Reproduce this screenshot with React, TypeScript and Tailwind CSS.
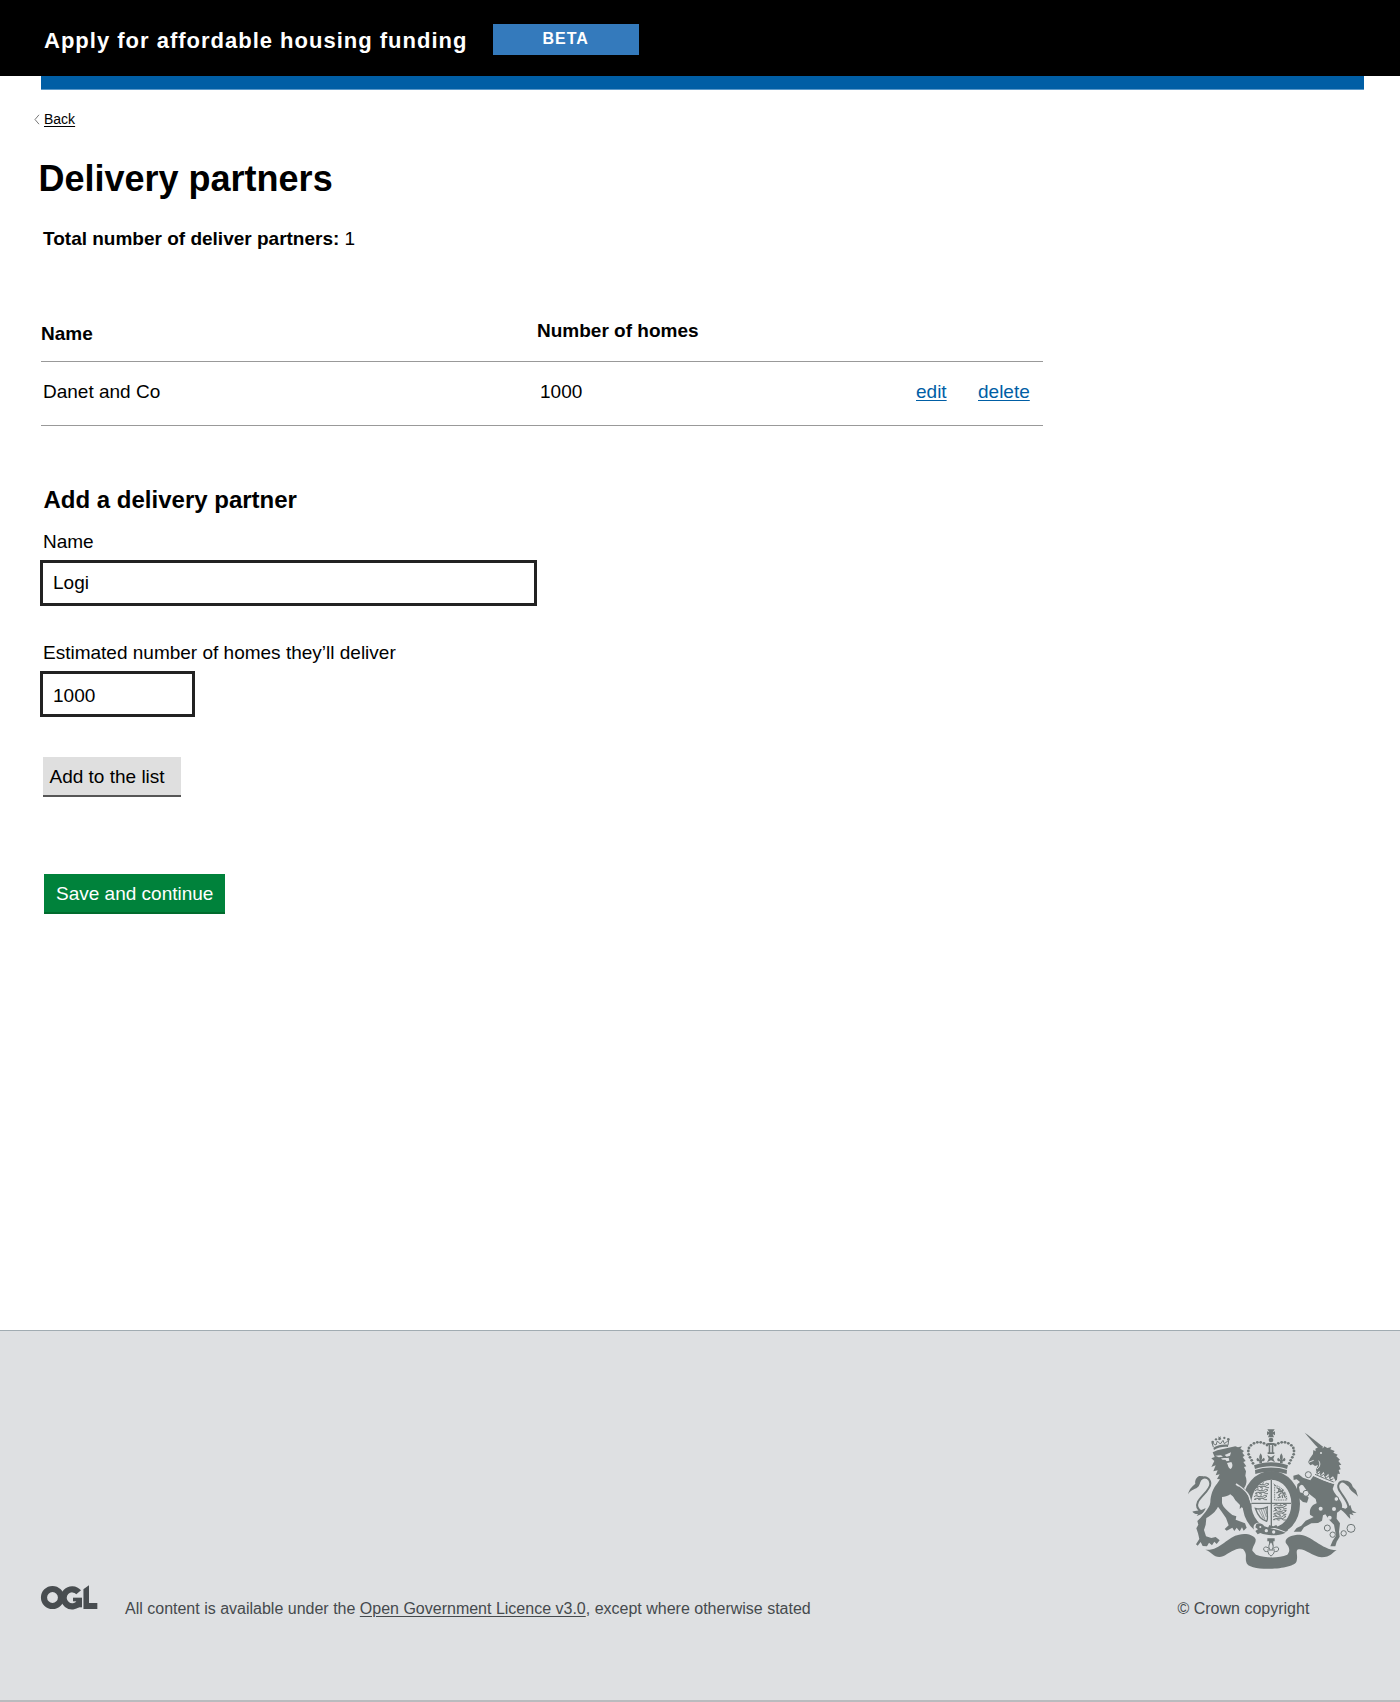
import React from "react";

const INK = "#6f7777";
const PAPER = "#dee0e2";

function OglLogo() {
  return (
    <svg className="block h-[26px] w-[59px]" viewBox="120 42 177 78" role="img" aria-label="OGL">
      <g fill="none" stroke="#484d50" strokeWidth="18.5">
        <circle cx="157.500" cy="82.500" r="25.500" />
        <path d="M236 67A25.500 25.500 0 1 0 238 97" />
        <path d="M219 88.500H246" strokeWidth="11" />
        <path d="M238 84V112" strokeWidth="16" />
      </g>
      <path d="M250 58L267 46V99H292V117H250Z" fill="#484d50" />
      <path d="M248.300 56V118" stroke={PAPER} strokeWidth="2" />
    </svg>
  );
}

const crownBeads: [number, number][] = [
  [291, 90], [282, 85], [272, 82], [262, 82], [252, 85], [243, 91], [237, 99], [235, 108], [236, 118], [240, 127], [245, 136], [249, 145],
  [316, 90], [325, 85], [335, 82], [345, 82], [355, 85], [364, 91], [370, 99], [372, 108], [371, 118], [367, 127], [362, 136], [358, 145],
];

const smallLions: [number, number][] = [
  [261, 212], [258, 230], [255, 248], [314, 275], [313, 292], [312, 309],
];

function FleurDeLis({ x, y }: { x: number; y: number }) {
  return (
    <g transform={`translate(${x} ${y})`}>
      <path d="M0 -15C6 -7 5 0 2 6L9 -2C15 2 12 9 7 9L4 9V15H-4V9L-7 9C-12 9 -15 2 -9 -2L-2 6C-5 0 -6 -7 0 -15Z" />
    </g>
  );
}

function RoyalArms() {
  return (
    <svg className="block h-[165px] w-[200px]" viewBox="0 0 600 495" role="img" aria-label="Royal coat of arms">
      <g fill={INK}>
        {/* Lion tail */}
        <path
          d="M97 292C82 284 78 273 84 260C93 242 122 224 121 205C120 190 106 183 96 190C87 196 84 207 76 212"
          fill="none"
          stroke={INK}
          strokeWidth="6"
        />
        <path d="M54 238C58 222 65 216 76 206C74 196 79 187 88 183L101 184C92 192 92 204 86 214C78 224 64 222 54 238Z" />
        <path d="M67 290C77 286 92 288 107 279C101 296 91 300 80 303L84 297C78 298 72 296 67 290Z" />
        {/* Lion body */}
        <path d="M128 112L142 106L196 94L204 97L216 94L211 101L222 108L217 113L224 122L218 126L227 138L220 141L229 154L222 156L228 169L226 182C232 196 230 208 222 219C230 231 238 245 240 264L244 276L238 287L229 278L222 286L216 276L209 282L210 270L196 256L190 245L181 238C172 244 164 245 156 246L156 264C159 279 176 290 187 300L199 304L197 314L213 320L225 325L230 338L221 347L216 337L209 349L200 338L193 348L187 338L170 347L164 342L176 331L168 309L154 289L144 275C136 291 125 300 109 309L107 329L102 345L108 364L124 369L137 366L149 376L140 387L133 380L126 391L117 383L111 394L98 393L92 381L83 392L78 388L88 372L84 355L79 340L85 329L82 318L92 308L107 290C113 281 120 274 121 262C122 238 129 221 142 205L150 193L141 192L149 178L137 181L143 166L130 169L137 151L124 156L133 138L124 130L134 126Z" />
        {/* Lion crown */}
        <path d="M130 98C144 90 159 87 174 89L174 96C160 94 146 97 132 105Z" />
        <path d="M130 96L126 84L138 90L142 78L151 87L159 76L163 86L176 76L174 91" fill="none" stroke={INK} strokeWidth="3" />
        <path d="M145 64L149 67L153 63L151 69L155 73L149 72L144 75L146 70Z" />
        <circle cx="128" cy="81" r="4" />
        <circle cx="138" cy="73" r="3.500" />
        <circle cx="149" cy="72" r="3.500" />
        <circle cx="163" cy="69" r="3.500" />
        <circle cx="175" cy="73" r="4" />
        {/* Lion face */}
        <g fill={PAPER}>
          <path d="M136 122L153 121L159 125L146 127Z" />
          <path d="M164 120L183 112L180 122L170 125Z" />
          <path d="M153 131C160 127 170 130 176 128L178 137L170 139L166 134L158 134Z" />
          <path d="M171 144L184 141C190 150 187 160 181 162C174 158 174 150 171 144Z" />
        </g>

        {/* Royal crown */}
        <path d="M292 43H314L308 52L315 49V61L308 57L312 67H294L298 57L291 61V49L298 52Z" />
        <circle cx="303" cy="75" r="7" />
        <path d="M292 84H314V90H292ZM296 90H300V113H296ZM306 90H310V113H306ZM293 112H313V117H293Z" />
        <path d="M303 92V111" stroke={INK} strokeWidth="1.500" />
        {crownBeads.map(([x, y]) => (
          <circle key={`${x}-${y}`} cx={x} cy={y} r="4.200" />
        ))}
        <FleurDeLis x={272} y={130} />
        <FleurDeLis x={334} y={130} />
        <path d="M292 120L303 127L314 120L310 131L315 142L303 136L291 142L296 131Z" />
        <path d="M252 151C285 139 321 139 354 151L351 162C319 151 287 151 255 162Z" />
        <path d="M255 165C285 155 321 155 351 165L350 177C321 168 285 168 256 177Z" />
      </g>

      {/* Garter */}
      <ellipse cx="304" cy="266" rx="73" ry="85" fill="none" stroke={INK} strokeWidth="26" />
      <path d="M304 195V336M244 265H363" stroke={INK} strokeWidth="4" />
      <g fill={INK}>
        {smallLions.map(([x, y]) => (
          <g key={`${x}-${y}`} transform={`translate(${x} ${y})`} fill="none" stroke={INK} strokeWidth="3">
            <path d="M-3 -3C3 -8 8 -4 12 -3L23 -3L28 -7L36 -5L31 -1L25 2L5 2L-2 5H4M7 2L11 6H17M23 2L29 6H36M2 -8H8M16 -7L21 -9" />
          </g>
        ))}
        <path
          d="M311 206L351 253M314 209V255H350V249M314 211C332 213 346 230 351 249"
          fill="none"
          stroke={INK}
          strokeWidth="2.500"
          strokeDasharray="5 2"
        />
        <path
          d="M320 219L328 221L335 229L341 236L346 248M328 221L325 231L319 234M327 230L337 229L339 222M334 233L326 240L331 246L322 249M338 236L347 234M336 240L338 249"
          fill="none"
          stroke={INK}
          strokeWidth="3.500"
        />
        <path d="M256 280C268 283 280 282 292 276C289 294 296 310 290 319C277 316 263 301 256 280Z" fill="none" stroke={INK} strokeWidth="4" />
        <path d="M266 283L280 310M273 282L285 314M280 281L289 306M286 279L291 297" stroke={INK} strokeWidth="2" />
      </g>

      {/* Lion forearm over the garter */}
      <path d="M198 207C213 217 230 229 237 243L243 265" fill="none" stroke={PAPER} strokeWidth="5" />
      <path d="M206 214C220 224 231 233 235 247L242 267L241 280L236 287L229 276L221 284L216 273L204 262L190 245Z" fill={INK} />

      {/* Buckled strap */}
      <path d="M252 330C265 318 277 323 286 331C308 338 329 341 350 352C326 370 291 368 265 358C253 352 248 341 252 330Z" fill={PAPER} />
      <path d="M259 327C268 322 278 326 283 334C305 342 326 344 347 353C322 365 291 362 271 354L263 358L256 348L264 343L256 337Z" fill={INK} />
      <path d="M355 346L382 327" stroke={PAPER} strokeWidth="4" />
      <path d="M298 330L310 334L319 330L325 339H294Z" fill={INK} />
      <g fill={PAPER}>
        <circle cx="289" cy="347" r="5" />
        <circle cx="311" cy="351" r="5" />
        <circle cx="271" cy="336" r="3" />
      </g>

      {/* Unicorn */}
      <g fill={INK}>
        <path d="M404 53L413 59L460 96L450 104L435 89Z" />
        <path d="M436 101L446 96L459 100L463 94L472 99L484 96L481 103L494 108L490 113L503 119L499 124L510 134L505 138L514 149L507 151L512 163L506 165L510 177L503 176L501 194L492 202C480 188 461 181 441 177L438 164L444 150L435 153L428 148L421 151L414 142L420 130L429 117L430 105L437 109Z" />
        <path d="M430 183C449 192 471 201 493 207L488 222C492 235 503 244 511 257C522 275 515 286 501 293L500 311L510 325L507 350L509 365L500 380L496 394L481 394L488 377L498 362L492 329L478 315L466 298L459 301L456 317L444 324L424 325L402 337L393 350L371 350L380 339L394 332L407 317L431 306L420 299C418 283 423 271 440 265L437 252L418 237L407 222L399 211L393 209L387 216L390 232L407 238L416 248L411 263L399 261L388 251L380 228L382 208L390 201L380 193L371 195L370 182L386 178L399 188L421 196Z" />
        <path
          d="M510 279C524 284 533 289 535 278C537 264 522 248 510 229C498 211 508 199 521 199C533 200 538 212 547 220"
          fill="none"
          stroke={INK}
          strokeWidth="6"
        />
        <path d="M517 200C530 192 545 201 548 215L558 226L564 245C554 232 542 230 536 215L525 206Z" />
        <path d="M510 276L526 282L541 270L546 286L560 294L546 293L551 301L539 297L541 312C531 303 524 292 510 282Z" />
      </g>
      <circle cx="453" cy="114" r="3" fill={PAPER} />
      <path d="M416 142L431 136M446 137C452 145 450 156 441 162" fill="none" stroke={PAPER} strokeWidth="3" />
      {/* Coronet collar */}
      <path d="M436 163L441 175L448 167L453 180L461 170L466 186L475 176L479 191L489 184L496 196L491 207C473 202 452 192 432 183Z" fill={PAPER} />
      <path d="M435 178C454 187 473 194 491 201M439 170L443 178L449 172L454 184L461 177L468 190L476 183L482 195L490 191" fill="none" stroke={INK} strokeWidth="3" />
      {/* Chain */}
      <g fill={PAPER} stroke={INK} strokeWidth="3">
        <circle cx="415" cy="179" r="9" />
        <circle cx="408" cy="235" r="9" />
        <circle cx="499" cy="252" r="7" />
        <circle cx="472" cy="339" r="9" />
        <circle cx="488" cy="359" r="8" />
        <circle cx="521" cy="355" r="8" />
        <circle cx="543" cy="340" r="12" />
      </g>
      <g fill={PAPER}>
        <circle cx="452" cy="281" r="6" />
        <circle cx="492" cy="282" r="6" />
        <circle cx="479" cy="308" r="6" />
      </g>

      {/* Motto ribbon */}
      <path
        d="M106 404C146 410 174 364 207 359C229 354 252 360 257 373C258 386 247 394 247 407L258 419C288 430 325 430 352 419C362 408 358 396 348 385C341 369 365 359 389 359C423 360 453 403 500 406C488 411 482 427 455 427C423 423 402 397 382 404C377 411 384 420 380 438C376 465 232 472 229 442C224 425 234 419 219 402C202 395 180 413 159 424C134 433 125 410 106 404Z"
        fill={INK}
      />

      {/* Pendant */}
      <path d="M292 370H314V379H310V394H297V379H292Z" fill={INK} />
      <path
        d="M303 380C311 390 311 398 306 403C315 395 325 393 326 402C326 409 318 411 313 409C312 417 306 421 303 423C299 421 294 416 294 409C288 411 280 409 281 401C283 393 292 395 300 403C295 398 295 390 303 380Z"
        fill={PAPER}
        stroke={INK}
        strokeWidth="3"
      />
      <path d="M292 405H315" stroke={INK} strokeWidth="3" />
    </svg>
  );
}

export default function App() {
  return (
    <div className="flex h-[1702px] w-[1400px] flex-col bg-white font-['Liberation_Sans',Arial,sans-serif] text-[19px] leading-[21px] text-black">
      <header className="h-[76px] bg-black pl-11 text-white">
        <div className="flex items-start">
          <div className="w-[449px] pt-7 text-[22px] leading-[25px] font-bold tracking-[1px] whitespace-nowrap">
            Apply for affordable housing funding
          </div>
          <div className="mt-6 h-[31px] w-[146px] bg-[#347abc] pt-1.5 pl-[49.5px] text-base leading-[17px] font-bold tracking-[1px]">
            BETA
          </div>
        </div>
      </header>
      <div className="mr-9 ml-[41px] h-[14px] shrink-0 border-b border-[#5a98c9] bg-[#005ea5]" />

      <main className="flex grow flex-col">
        <a className="mt-[21px] ml-[34px] flex h-4 items-center text-sm leading-4">
          <svg className="mr-1 h-[11px] w-[6px]" viewBox="0 0 6 11" fill="none" stroke="#777" aria-hidden="true">
            <path d="M5 .8L1 5.500L5 10.200" />
          </svg>
          <span className="underline underline-offset-2">Back</span>
        </a>

        <h1 className="mt-[31px] ml-[38.5px] text-[36px] leading-[41px] font-bold">Delivery partners</h1>
        <p className="mt-[29px] ml-[43px]">
          <b>Total number of deliver partners:</b> 1
        </p>

        <section className="mt-[71px] ml-[41px] w-[1002px]">
          <div className="flex h-[42px] border-b border-[#999] font-bold">
            <div className="w-[496px] pt-[3px]">Name</div>
            <div>Number of homes</div>
          </div>
          <div className="flex h-16 border-b border-[#999] pt-[19px]">
            <div className="w-[499px] pl-0.5">Danet and Co</div>
            <div className="w-[376px]">1000</div>
            <a className="w-[62px] text-[#005ea5] underline underline-offset-2">edit</a>
            <a className="text-[#005ea5] underline underline-offset-2">delete</a>
          </div>
        </section>

        <form className="mt-[60px] flex flex-col items-start">
          <h2 className="ml-[43.5px] text-2xl leading-[27px] font-bold">Add a delivery partner</h2>
          <label className="mt-[18px] ml-[43px]">Name</label>
          <div className="mt-2 ml-10 h-[46px] w-[497px] border-3 border-[#222] pt-[9px] pl-2.5">Logi</div>
          <label className="mt-9 ml-[43px]">Estimated number of homes they’ll deliver</label>
          <div className="mt-2 ml-10 h-[46px] w-[155px] border-3 border-[#222] pt-[11px] pl-2.5">1000</div>
          <button type="button" className="mt-10 ml-[43px] h-10 w-[138px] border-b-2 border-[#565656] bg-[#dfdfdf] pl-[6.5px] text-left">
            Add to the list
          </button>
          <button type="button" className="mt-[77px] ml-11 h-10 w-[181px] border-b-2 border-[#006b2d] bg-[#00823b] pl-3 text-left text-white">
            Save and continue
          </button>
        </form>
      </main>

      <footer className="flex h-[372px] shrink-0 flex-col border-t border-[#a1acb2] bg-[#dee0e2] text-base leading-[17px] text-[#454a4d]">
        <div className="mt-[84px] ml-[1170px]">
          <RoyalArms />
        </div>
        <div className="mt-1 flex h-[118px] border-b-2 border-[#b9bbbe] pl-10">
          <OglLogo />
          <p className="ml-[26px] w-[1052.5px] pt-4">
            All content is available under the{" "}
            <a className="underline underline-offset-2">Open Government Licence v3.0</a>, except where otherwise stated
          </p>
          <p className="pt-4">© Crown copyright</p>
        </div>
      </footer>
    </div>
  );
}
